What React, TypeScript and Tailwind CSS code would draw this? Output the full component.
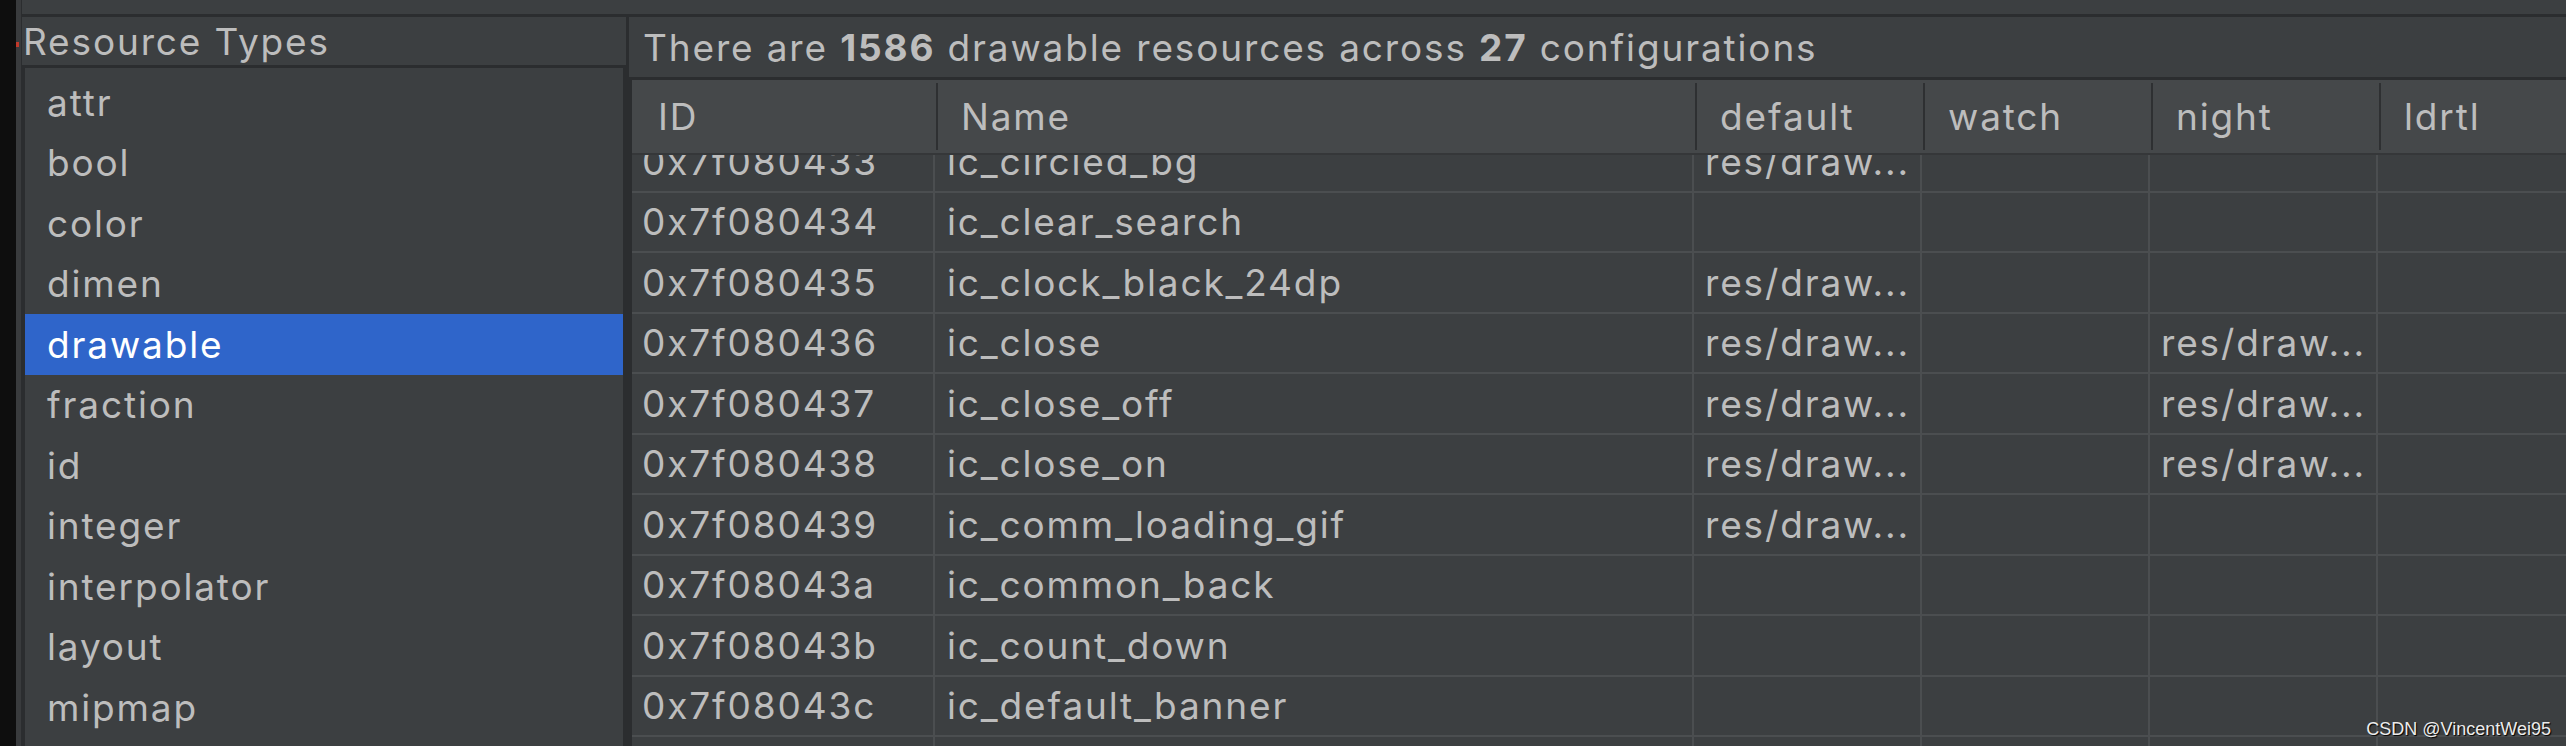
import React from "react";

const types = ["attr", "bool", "color", "dimen", "drawable", "fraction", "id", "integer", "interpolator", "layout", "mipmap"];

type Row = { id: string; name: string; def?: boolean; night?: boolean };
const rows: Row[] = [
  { id: "0x7f080433", name: "ic_circled_bg", def: true },
  { id: "0x7f080434", name: "ic_clear_search" },
  { id: "0x7f080435", name: "ic_clock_black_24dp", def: true },
  { id: "0x7f080436", name: "ic_close", def: true, night: true },
  { id: "0x7f080437", name: "ic_close_off", def: true, night: true },
  { id: "0x7f080438", name: "ic_close_on", def: true, night: true },
  { id: "0x7f080439", name: "ic_comm_loading_gif", def: true },
  { id: "0x7f08043a", name: "ic_common_back" },
  { id: "0x7f08043b", name: "ic_count_down" },
  { id: "0x7f08043c", name: "ic_default_banner" },
  { id: "0x7f08043d", name: "ic_default_head" },
];

const font = { fontFamily: "Inter, 'Noto Sans', sans-serif" };

function HeaderCell({ label, w, first }: { label: string; w: string; first?: boolean }) {
  return (
    <div className={`flex h-full shrink-0 items-center ${w}`}>
      {!first && <div className="my-[3px] w-[2px] self-stretch bg-[#2e3032]" />}
      <span className={first ? "pl-[26px]" : "pl-[23px]"}>{label}</span>
    </div>
  );
}

export default function App() {
  return (
    <div
      className="relative flex h-[746px] w-[2566px] overflow-hidden bg-[#2b2d2f] text-[37px] leading-none tracking-[0.05em] text-[#bdbdbd]"
      style={font}
    >
      <div className="w-[16px] shrink-0 bg-[#0e0e0e]" />
      <div className="flex w-[5px] shrink-0 flex-col bg-[#393b3d]">
        <div className="mt-[42px] h-[5px] w-[3px] bg-[#c0392b]" />
      </div>
      <div className="flex flex-1 flex-col pl-[1px]">
        <div className="h-[14px] shrink-0 bg-[#3c3f41]" />
        <div className="mt-[3px] flex flex-1 gap-[3px] overflow-hidden">
          {/* left */}
          <div className="flex w-[604px] shrink-0 flex-col gap-[3px]">
            <div className="flex h-[48px] shrink-0 items-center bg-[#3c3f41] pl-[1px] tracking-[0.05em]">
              Resource Types
            </div>
            <div className="mx-[3px] flex-1 bg-[#3c3f41] pt-[4px]">
              {types.map((t) => (
                <div
                  key={t}
                  className={`flex h-[60.5px] items-center pl-[22px] ${
                    t === "drawable" ? "bg-[#2f65ca] text-white" : ""
                  }`}
                >
                  {t}
                </div>
              ))}
            </div>
          </div>
          {/* right */}
          <div className="flex flex-1 flex-col gap-[3px]">
            <div className="flex h-[60px] shrink-0 items-center bg-[#3c3f41] pl-[14px]">
              <span>
                There are <b className="font-bold">1586</b> drawable resources across{" "}
                <b className="font-bold">27</b> configurations
              </span>
            </div>
            <div className="ml-[3px] flex flex-1 flex-col overflow-hidden">
              <div className="flex h-[75px] shrink-0 border-b-2 border-[#353739] bg-[#45484a]">
                <HeaderCell label="ID" w="w-[304px]" first />
                <HeaderCell label="Name" w="w-[759px]" />
                <HeaderCell label="default" w="w-[228px]" />
                <HeaderCell label="watch" w="w-[228px]" />
                <HeaderCell label="night" w="w-[228px]" />
                <HeaderCell label="ldrtl" w="flex-1" />
              </div>
              <div className="flex-1 overflow-hidden bg-[#3c3f41]">
                <div className="-mt-[23px]">
                  {rows.map((r) => (
                    <div key={r.id} className="flex h-[60.5px] border-b-2 border-[#4b4e50]">
                      <div className="flex w-[303px] shrink-0 items-center border-r-2 border-[#4b4e50] pl-[10px]">
                        {r.id}
                      </div>
                      <div className="flex w-[759px] shrink-0 items-center border-r-2 border-[#4b4e50] pl-[12px]">
                        {r.name}
                      </div>
                      <div className="flex w-[228px] shrink-0 items-center border-r-2 border-[#4b4e50] pl-[11px]">
                        {r.def ? "res/draw..." : ""}
                      </div>
                      <div className="flex w-[228px] shrink-0 items-center border-r-2 border-[#4b4e50] pl-[11px]" />
                      <div className="flex w-[228px] shrink-0 items-center border-r-2 border-[#4b4e50] pl-[11px]">
                        {r.night ? "res/draw..." : ""}
                      </div>
                      <div className="flex-1" />
                    </div>
                  ))}
                </div>
              </div>
            </div>
          </div>
        </div>
      </div>
      <div
        className="absolute bottom-[8px] right-[15px] text-[18px] tracking-normal text-[#ececec] [text-shadow:1px_1px_1px_#000]"
        style={{ fontFamily: "'Liberation Sans', Arial, sans-serif" }}
      >
        CSDN @VincentWei95
      </div>
    </div>
  );
}
